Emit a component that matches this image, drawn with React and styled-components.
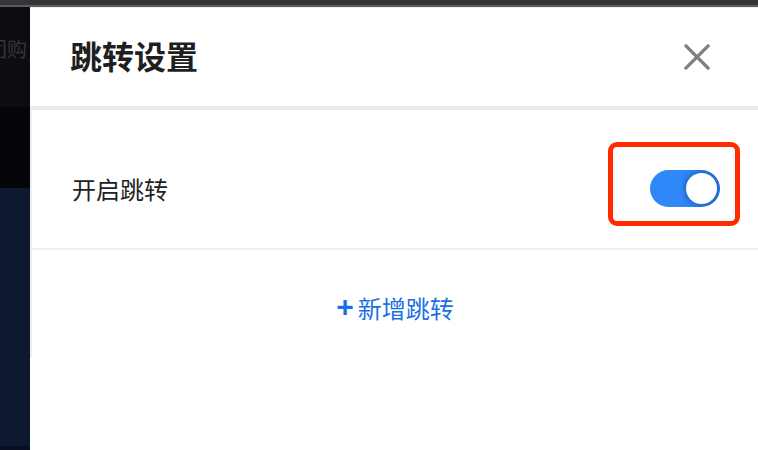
import React from "react";
import styled, { createGlobalStyle } from "styled-components";

const GlobalStyle = createGlobalStyle`
  html, body {
    margin: 0;
    padding: 0;
    width: 758px;
    height: 450px;
    overflow: hidden;
    background: #ffffff;
    font-family: "Noto Sans CJK SC", "Noto Sans", sans-serif;
  }
`;

function App() {
  return (
    <Page>
      <GlobalStyle />
      <TopBar />
      <Body>
        <Sidebar>
          <SideTop>
            <SideLabel>团购</SideLabel>
          </SideTop>
          <SideBlack />
          <SideNavy />
          <SideFoot />
        </Sidebar>
        <Drawer>
          <Header>
            <Title>跳转设置</Title>
            <CloseButton aria-label="关闭">
              <svg width="26" height="26" viewBox="0 0 26 26">
                <path
                  d="M2 2 L24 24 M24 2 L2 24"
                  stroke="#808080"
                  strokeWidth="3.2"
                  strokeLinecap="square"
                  fill="none"
                />
              </svg>
            </CloseButton>
          </Header>
          <Content>
            <Row>
              <RowLabel>开启跳转</RowLabel>
              <SwitchWrap>
                <Switch $on>
                  <Knob />
                </Switch>
                <Highlight />
              </SwitchWrap>
            </Row>
            <AddArea>
              <AddButton>
                <Plus>+</Plus>新增跳转
              </AddButton>
            </AddArea>
          </Content>
        </Drawer>
      </Body>
    </Page>
  );
}

export default App;

const Page = styled.div`
  width: 758px;
  height: 450px;
  display: flex;
  flex-direction: column;
`;

const TopBar = styled.div`
  height: 5px;
  background: #353538;
  border-bottom: 2px solid #5b5b5f;
  flex-shrink: 0;
`;

const Body = styled.div`
  flex: 1;
  display: flex;
  min-height: 0;
`;

const Sidebar = styled.div`
  width: 30px;
  flex-shrink: 0;
  display: flex;
  flex-direction: column;
  overflow: hidden;
`;

const SideTop = styled.div`
  height: 100px;
  background: #0c0d11;
  display: flex;
  align-items: center;
  padding-bottom: 18px;
  box-sizing: border-box;
`;

const SideLabel = styled.span`
  margin-left: -13px;
  font-size: 20px;
  color: #34353a;
  white-space: nowrap;
`;

const SideBlack = styled.div`
  height: 81px;
  background: #040508;
`;

const SideNavy = styled.div`
  flex: 1;
  background: #0e1830;
`;

const SideFoot = styled.div`
  height: 4px;
  background: #090e22;
`;

const Drawer = styled.div`
  flex: 1;
  display: flex;
  flex-direction: column;
  background: #ffffff;
  border-top: 1px solid #eef0f3;
`;

const Header = styled.div`
  height: 98px;
  display: flex;
  align-items: center;
  justify-content: space-between;
  padding: 0 48px 0 40px;
  border-bottom: 4px solid #ebebeb;
  flex-shrink: 0;
`;

const Title = styled.h2`
  margin: 0 0 4px 0;
  font-size: 32px;
  font-weight: 700;
  color: #1f1f1f;
  letter-spacing: 0;
`;

const CloseButton = styled.button`
  border: none;
  background: none;
  padding: 0;
  display: flex;
  cursor: pointer;
`;

const Content = styled.div`
  height: 248px;
  border-left: 2px solid #eeeeee;
  display: flex;
  flex-direction: column;
`;

const Row = styled.div`
  height: 140px;
  box-sizing: border-box;
  padding: 18px 38px 0 40px;
  display: flex;
  align-items: center;
  justify-content: space-between;
  border-bottom: 2px solid #f0f0f0;
`;

const RowLabel = styled.span`
  font-size: 24px;
  color: #222222;
`;

const SwitchWrap = styled.div`
  position: relative;
  display: flex;
`;

const Switch = styled.div`
  width: 70px;
  height: 37px;
  border-radius: 19px;
  background: ${(p) =>
    p.$on
      ? "linear-gradient(90deg, #2f87f8 0%, #2f87f8 45%, #1e6fd6 100%)"
      : "#d9d9d9"};
  display: flex;
  align-items: center;
  justify-content: ${(p) => (p.$on ? "flex-end" : "flex-start")};
  padding: 0 3px;
  box-sizing: border-box;
`;

const Knob = styled.div`
  width: 31px;
  height: 31px;
  border-radius: 50%;
  background: #ffffff;
  box-shadow: -2px 0 4px rgba(0, 40, 100, 0.35);
`;

const Highlight = styled.div`
  position: absolute;
  top: -28px;
  left: -42px;
  right: -20px;
  bottom: -19px;
  border: 5px solid #ff2a00;
  border-radius: 9px;
  pointer-events: none;
`;

const AddArea = styled.div`
  flex: 1;
  display: flex;
  align-items: center;
  justify-content: center;
  padding-top: 6px;
`;

const AddButton = styled.button`
  border: none;
  background: none;
  padding: 0;
  font-family: inherit;
  font-size: 24px;
  color: #1a6fe3;
  display: flex;
  align-items: center;
  cursor: pointer;
`;

const Plus = styled.span`
  font-size: 30px;
  font-weight: 700;
  margin-right: 4px;
  line-height: 1;
  font-family: "Liberation Sans", sans-serif;
`;
